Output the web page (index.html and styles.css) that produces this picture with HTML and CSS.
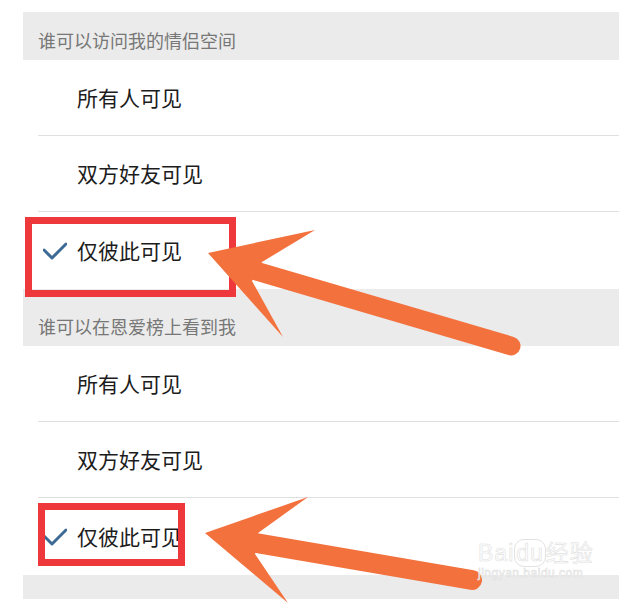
FILE: index.html
```html
<!DOCTYPE html>
<html>
    <head>
        <meta charset="utf-8">
        <link rel="stylesheet" href="styles.css">
    </head>
    <body>
        <div id="page">
            <div class="settings">
                <div class="group-title first">谁可以访问我的情侣空间</div>
                <div class="option"><span class="check"></span><span>所有人可见</span></div>
                <div class="option"><span class="check"></span><span>双方好友可见</span></div>
                <div class="option last"><span class="check"><svg viewBox="0 0 24 18" width="24" height="18"><path d="M1 8 L9 16 L23 2" /></svg></span><span>仅彼此可见</span></div>

                <div class="group-title">谁可以在恩爱榜上看到我</div>
                <div class="option"><span class="check"></span><span>所有人可见</span></div>
                <div class="option"><span class="check"></span><span>双方好友可见</span></div>
                <div class="option last"><span class="check"><svg viewBox="0 0 24 18" width="24" height="18"><path d="M1 8 L9 16 L23 2" /></svg></span><span>仅彼此可见</span></div>
                <div class="group-foot"></div>
            </div>

            <!-- annotation layer drawn on top of the screenshot -->
            <svg class="marks" width="619" height="606" viewBox="0 0 619 606">
                <rect class="box" x="28.5" y="220.5" width="204" height="73" />
                <rect class="box" x="41.5" y="506.5" width="140" height="56" />
                <line class="shaft" x1="256" y1="271" x2="511" y2="346" />
                <polygon class="head" points="208,253 315,230 262,262 252,281 283,337" />
                <line class="shaft wide" x1="256" y1="543" x2="472" y2="580" />
                <polygon class="head" points="205,533 308,497 258,533 255,554 288,603" />
            </svg>

            <div class="watermark">
                <div class="wm-logo">Bai<span class="wm-du">du</span>经验</div>
                <div class="wm-site">jingyan.baidu.com</div>
            </div>
        </div>
    </body>
</html>
```

FILE: styles.css
```css
body{
    margin: 0;
    background-color: #fff;
    font-family: "Noto Sans CJK SC", "Noto Sans", sans-serif;
    color: #1c1c1c;
}

#page{
    position: relative;
    width: 619px;
    height: 606px;
    overflow: hidden;
}

.settings{
    margin-left: 23px;
    padding-top: 12px;
}

.group-title{
    box-sizing: border-box;
    height: 57px;
    display: flex;
    align-items: flex-end;
    padding: 0 0 11px 15px;
    background-color: #ebebeb;
    color: #777;
    font-size: 18px;
    line-height: 18px;
}

.group-title.first{
    height: 48px;
}

.option{
    box-sizing: border-box;
    height: 76px;
    margin-left: 15px;
    padding-left: 5px;
    display: flex;
    align-items: center;
    border-bottom: 1px solid #e0e0e0;
    font-size: 21px;
    line-height: 21px;
}

.option.last{
    border-bottom: 0;
    height: 77px;
}

.option > .check{
    width: 34px;
    height: 18px;
    display: flex;
    align-items: center;
}

.option > .check svg path{
    fill: none;
    stroke: #3d6b96;
    stroke-width: 3;
    stroke-linecap: round;
    stroke-linejoin: round;
}

.group-foot{
    height: 24px;
    background-color: #ebebeb;
}

.marks{
    position: absolute;
    top: 0;
    left: 0;
}

.marks .box{
    fill: none;
    stroke: #ee383b;
    stroke-width: 7;
}

.marks .shaft{
    stroke: #f3713d;
    stroke-width: 19;
    stroke-linecap: round;
}

.marks .shaft.wide{
    stroke-width: 20;
}

.marks .head{
    fill: #f3713d;
}

.watermark{
    position: absolute;
    left: 478px;
    top: 540px;
    font-family: "Liberation Sans", "Noto Sans CJK SC", sans-serif;
    color: rgba(255,255,255,0.8);
    -webkit-text-stroke: 0.6px #e0e0e0;
}

.wm-logo{
    font-size: 23px;
    line-height: 26px;
    letter-spacing: 1px;
}

.wm-du{
    border: 1px solid #e2e2e2;
    border-radius: 10px;
    padding: 0 1px;
}

.wm-site{
    font-size: 12px;
    line-height: 14px;
    letter-spacing: 0.5px;
}
```
